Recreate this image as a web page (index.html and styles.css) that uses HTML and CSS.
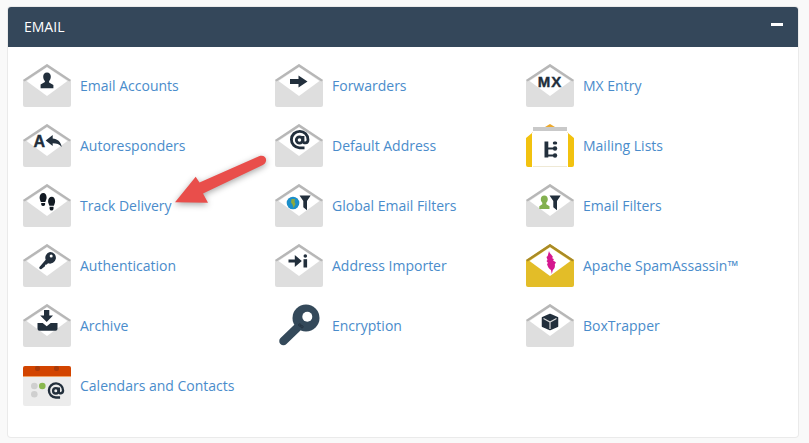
FILE: index.html
```html
<!DOCTYPE html>
<html lang="en">
<head>
<meta charset="utf-8">
<title>Email</title>
<link rel="stylesheet" href="styles.css">
</head>
<body>
<svg class="defs" width="0" height="0" aria-hidden="true">
  <symbol id="env" viewBox="0 0 48 44">
    <path d="M0 16 24 0l24 16v25a2 2 0 0 1-2 2H2a2 2 0 0 1-2-2z" fill="#dedede"/>
    <path d="M0 16 24 0l24 16-1.600 1.600L24 3 1.600 17.600z" fill="#b7b7b7"/>
    <path d="M3.500 17 24 3.200 44.500 17 24 32z" fill="#fff"/>
  </symbol>
</svg>
<section class="panel">
  <header class="panel-head">
    <h2 class="panel-title">EMAIL</h2>
    <span class="collapse"></span>
  </header>
  <div class="grid">
    <a class="item"><svg class="icon" viewBox="0 0 48 44"><use href="#env"/><path d="M24 8.500c2.500 0 3.800 1.900 3.800 4.200 0 1.900-.8 3.400-1.700 4.300v1.500l4.300 2.500v3.300H17.600V20.500l4.300-2.500V17c-.9-.9-1.700-2.400-1.700-4.300 0-2.300 1.300-4.200 3.800-4.200z" fill="#222f3c"/></svg><span>Email Accounts</span></a>
    <a class="item"><svg class="icon" viewBox="0 0 48 44"><use href="#env"/><path d="M15 15h8.500v-3.500l9 6-9 6V20H15z" fill="#222f3c"/></svg><span>Forwarders</span></a>
    <a class="item"><svg class="icon" viewBox="0 0 48 44"><use href="#env"/><text x="24" y="23.300" class="glyph glyph-mx">MX</text></svg><span>MX Entry</span></a>

    <a class="item"><svg class="icon" viewBox="0 0 48 44"><use href="#env"/><text x="16.300" y="22.700" class="glyph glyph-a">A</text><path d="M22.700 16.500l7-5.500v3.500c4.500.2 8.300 3.200 9 8.500-2.200-2.800-5-3.800-9-3.800V22z" fill="#222f3c"/></svg><span>Autoresponders</span></a>
    <a class="item"><svg class="icon" viewBox="0 0 48 44"><use href="#env"/><g class="at"><circle cx="24.500" cy="16" r="3.200"/><path d="M28 12v5c0 2.800 5 2.800 5-1.300a8.300 8.300 0 1 0-8.500 8.200h5"/></g></svg><span>Default Address</span></a>
    <a class="item"><svg class="icon" viewBox="0 0 48 44"><path d="M19 3 24 0l5 3z" fill="#eda92c"/><path d="M0 14l6-5v34H2a2 2 0 0 1-2-2zM48 14l-6-5v34h4a2 2 0 0 0 2-2z" fill="#f2c20f"/><path d="M6 9l3-3v2zM42 9l-3-3v2z" fill="#eda92c"/><rect x="7" y="3" width="34" height="40" fill="#fff"/><rect x="7" y="3" width="34" height="4" fill="#c9c9c9"/><rect x="7" y="42" width="34" height="1" fill="#efe9d5"/><path d="M18.500 17.500h3.800v16h-3.800zM22 23.500h5v2h-5zM22 30.500h5v2h-5z" fill="#222f3c"/><circle cx="29" cy="24.500" r="2.200" fill="#222f3c"/><circle cx="29" cy="31.500" r="2.200" fill="#222f3c"/><rect x="26.800" y="17.500" width="4.400" height="3" rx="1.500" fill="#222f3c"/></svg><span>Mailing Lists</span></a>

    <a class="item"><svg class="icon" viewBox="0 0 48 44"><use href="#env"/><path d="M20.300 9c2 0 3.300 2 3.300 4.500 0 1.800-.8 3-1.300 4.500h-4.400c-.6-1.500-1.300-2.700-1.300-4.500C16.600 11 18.200 9 20.300 9zM18.200 19h3.900v1.500a2 2 0 0 1-3.900 0z" fill="#111922"/><path d="M28.800 12.700c2 0 3.300 2 3.300 4.500 0 1.800-.7 3-1.300 4.500h-4.400c-.5-1.500-1.300-2.700-1.300-4.500 0-2.500 1.600-4.500 3.700-4.500zM26.600 22.700h3.900v2.200a2 2 0 0 1-3.900 0z" fill="#111922"/></svg><span>Track Delivery</span></a>
    <a class="item"><svg class="icon" viewBox="0 0 48 44"><use href="#env"/><circle cx="18" cy="19" r="6.300" fill="#1b8ec9"/><path d="M16.500 15h3.500l-.5 3 1 2-2 4-1-3.500-1.500-2z" fill="#8aa93f"/><path d="M24.500 11.500h11.200l-3.700 5.500v9.300l-3.700-3V17z" fill="#222f3c"/></svg><span>Global Email Filters</span></a>
    <a class="item"><svg class="icon" viewBox="0 0 48 44"><use href="#env"/><path d="M18.300 11.500c2.200 0 3.500 1.700 3.500 3.800 0 1.500-.7 2.800-1.500 3.500v1.500l3.200 2V25H13.300V22.300l3-2v-1.500c-.8-.7-1.500-2-1.500-3.500 0-2.100 1.300-3.800 3.500-3.800z" fill="#83b04f"/><path d="M23.500 11.500h11.200L31 17v9.300l-3.700-3V17z" fill="#222f3c"/></svg><span>Email Filters</span></a>

    <a class="item"><svg class="icon" viewBox="0 0 48 44"><use href="#env"/><path d="M27 8a5.800 5.800 0 1 1-2 11.200l-1.200 1.300-1.600.2-.2 1.600-3.500 2.700c-1.300.9-2.900-.6-2-2l6.200-7.200A5.800 5.800 0 0 1 27 8z" fill="#222f3c"/><circle cx="28.200" cy="12" r="1.500" fill="#fff"/></svg><span>Authentication</span></a>
    <a class="item"><svg class="icon" viewBox="0 0 48 44"><use href="#env"/><path d="M13.500 15.500h6.300V11l7 6-7 6v-4.500h-6.300z" fill="#222f3c"/><circle cx="30.300" cy="12" r="1.800" fill="#222f3c"/><rect x="28.500" y="15.200" width="3.600" height="8.300" fill="#222f3c"/></svg><span>Address Importer</span></a>
    <a class="item"><svg class="icon" viewBox="0 0 48 44"><path d="M0 16 24 0l24 16v25a2 2 0 0 1-2 2H2a2 2 0 0 1-2-2z" fill="#e3bd28"/><path d="M0 16 24 0l24 16-1.600 1.600L24 3 1.600 17.600z" fill="#a88a28"/><path d="M3.500 17 24 3.200 44.500 17 24 32z" fill="#fff"/><path d="M23 7c.5 2.500 3 4 4 6l-1 1 2 1.300-1 1 3 2.200-1.200 1.800c.5 2.700-.5 4.700-2 5.700l-1 4-.8-4c-2-1-3.200-3-4-6l1-1-1.500-2 1-1-1-3 1.200-1z" fill="#d5178f"/></svg><span>Apache SpamAssassin™</span></a>

    <a class="item"><svg class="icon" viewBox="0 0 48 44"><use href="#env"/><path d="M21 6h5.300v5.500H30L23.700 18l-6.500-6.500H21z" fill="#222f3c"/><path d="M14.500 19h5.200l4 3.300 4-3.300h6.800v5.700a2 2 0 0 1-2 2h-16a2 2 0 0 1-2-2z" fill="#222f3c"/></svg><span>Archive</span></a>
    <a class="item"><svg class="icon" viewBox="0 0 48 44"><circle cx="31" cy="14" r="13.500" fill="#34495a"/><path d="M22 24 8.500 37" stroke="#34495a" stroke-width="8.500" stroke-linecap="round"/><circle cx="32.300" cy="12.700" r="5" fill="#fff"/><circle cx="24.800" cy="21" r="1.200" fill="none" stroke="#222f3c" stroke-width=".8"/><circle cx="27" cy="22.800" r="1.200" fill="none" stroke="#222f3c" stroke-width=".8"/></svg><span>Encryption</span></a>
    <a class="item"><svg class="icon" viewBox="0 0 48 44"><use href="#env"/><path d="M24 10.500l7.500 3.300v8.400L24 25.500l-7.500-3.300v-8.400z" fill="#222f3c" stroke="#222f3c" stroke-width="1.500" stroke-linejoin="round"/><path d="M17.500 14.500l6.500 3.500 6.500-3.500M24 18v7" fill="none" stroke="#d9d9d9" stroke-width="1.200"/></svg><span>BoxTrapper</span></a>

    <a class="item"><svg class="icon" viewBox="0 0 48 44"><path d="M0 4a2 2 0 0 1 2-2h44a2 2 0 0 1 2 2v36a2 2 0 0 1-2 2H2a2 2 0 0 1-2-2z" fill="#ececec"/><path d="M0 4a2 2 0 0 1 2-2h44a2 2 0 0 1 2 2v8H0z" fill="#d24400"/><rect x="0" y="12" width="48" height="1" fill="#f1a163"/><rect x="12" y="2" width="5" height="5" rx="2" fill="#a83a0b"/><rect x="31" y="2" width="5" height="5" rx="2" fill="#a83a0b"/><circle cx="11.300" cy="22" r="3.300" fill="#cfcfcf"/><circle cx="19.300" cy="22" r="3.300" fill="#8ab84f"/><circle cx="11.300" cy="30.300" r="3.300" fill="#cfcfcf"/><g class="at" transform="translate(12 13.200) scale(.85)"><circle cx="24.500" cy="16" r="3.200"/><path d="M28 12v5c0 2.800 5 2.800 5-1.300a8.300 8.300 0 1 0-8.500 8.200h5"/></g></svg><span>Calendars and Contacts</span></a>
  </div>
  <svg class="arrow" viewBox="0 0 100 55" width="100" height="55" aria-hidden="true"><path d="M1 47.300 21.700 21.700 25.500 27.500 85 1.200c4.500-1.500 7.800 1 7 4.800-.3 1.800-1.700 3.200-3.200 4.100L29 38.500l5 9.200z" fill="#e94e4b"/></svg>
</section>
</body>
</html>
```
FILE: styles.css
```css
html, body {
  margin: 0;
  padding: 0;
}
body {
  background: #f9f9f9;
  padding: 7px 11px 6px 8px;
  font-family: "Open Sans", "Liberation Sans", sans-serif;
  font-size: 14px;
}
.defs {
  position: absolute;
}
.panel {
  position: relative;
  background: #fff;
  border-radius: 3px;
  box-shadow: 0 0 0 1px #eaeaea;
  width: 790px;
  height: 430px;
}
.panel-head {
  display: flex;
  align-items: center;
  justify-content: space-between;
  height: 40px;
  box-sizing: border-box;
  padding: 0 15.500px 0 16px;
  background: #34475a;
  border-radius: 3px 3px 0 0;
}
.panel-title {
  margin: 0 0 2px;
  font-size: 14px;
  font-weight: 400;
  color: #fff;
}
.collapse {
  width: 12px;
  height: 3px;
  margin-bottom: 6px;
  background: #fff;
}
.grid {
  display: grid;
  grid-template-columns: 252px 251px 1fr;
  row-gap: 16px;
  padding: 17px 15px 0;
}
.item {
  display: flex;
  align-items: center;
  gap: 9px;
  height: 44px;
  color: #4a8ccb;
}
.item span {
  margin-bottom: 2px;
}
.icon {
  width: 48px;
  height: 44px;
  flex: none;
}
.glyph {
  font-family: "Liberation Sans", sans-serif;
  font-weight: 700;
  fill: #222f3c;
  stroke: #222f3c;
  stroke-width: .4px;
  text-anchor: middle;
}
.glyph-mx {
  font-size: 15px;
  letter-spacing: 1px;
}
.glyph-a {
  font-size: 16px;
}
.at circle,
.at path {
  fill: none;
  stroke: #222f3c;
  stroke-width: 2.800px;
}
.arrow {
  position: absolute;
  left: 166px;
  top: 148px;
  filter: drop-shadow(0 2px 3px rgba(0, 0, 0, .35));
}
```
